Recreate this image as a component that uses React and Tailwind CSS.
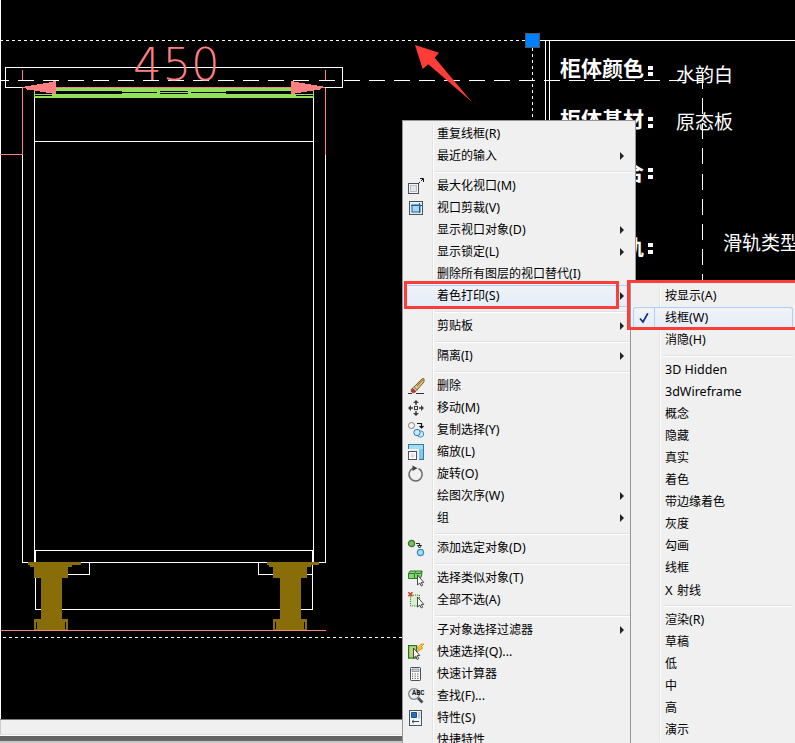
import React from "react";

const ink = "#4a525c";

const icons = {
  maximize: (
    <>
      <rect x="0.5" y="5.5" width="10" height="10" fill="#f6f6f6" stroke={ink} />
      <rect x="2.5" y="7.5" width="6" height="6" fill="#e4e6e8" stroke="#b9bdc2" />
      <path d="M10.5 5.5L12 4M13 3l2-2M12 .5h3.500v3.500" stroke="#111" fill="none" />
    </>
  ),
  clip: (
    <>
      <rect x="1.500" y="1.500" width="13" height="13" fill="#e9edf1" stroke={ink} />
      <rect x="4" y="5" width="8" height="7" fill="#a9d7f5" stroke="#1b5f9e" />
      <path d="M3 5.500h11M11.500 3v10" stroke="#1b5f9e" />
    </>
  ),
  erase: (
    <>
      <path d="M0 15.500h4M8 15.500h8" stroke="#333" />
      <path d="M5.500 9.500L14 .8h2v3L9 12z" fill="#e3c07a" stroke="#4b3a20" strokeWidth=".8" />
      <path d="M9 8l5.500-6" stroke="#8a6420" />
      <path d="M5.500 9l3.700 3.200-1.200 1.200-3.700-3z" fill="#d6dde3" stroke="#555" strokeWidth=".6" />
      <path d="M4.200 10.300l3.600 3.200c-1 1.300-3 1.500-4 .7s-1-2.600.4-3.900z" fill="#c53a1c" stroke="#7d2410" strokeWidth=".6" />
    </>
  ),
  move: (
    <>
      <rect x="6.500" y="6.500" width="3" height="3" fill="#fff" stroke="#333" />
      <path d="M8 0l3 3H5zM8 16l3-3H5zM0 8l3-3v6zM16 8l-3-3v6z" fill="#3b4046" />
      <path d="M8 2v3M8 11v3M2 8h3M11 8h3" stroke="#3b4046" strokeWidth="1.500" />
    </>
  ),
  copy: (
    <>
      <circle cx="3.500" cy="3.500" r="3" fill="#f7f7f7" stroke="#777" />
      <path d="M9 1.500h4.500V5M11.500 4l2 2 2-2" stroke="#111" fill="none" strokeWidth="1.200" />
      <circle cx="12.500" cy="12" r="3.200" fill="#cfe9fb" stroke="#3f8fcb" />
      <circle cx="9" cy="10.500" r="3.200" fill="#cfe9fb" stroke="#2679b8" />
    </>
  ),
  scale: (
    <>
      <rect x=".5" y=".5" width="15" height="15" fill="#a5dbf5" stroke="#277bb4" />
      <path d="M11 5h4v10h-4z" fill="#82c5e9" />
      <path d="M0 5h11v11H0z" fill="#f0f0f0" />
      <rect x=".5" y="7.500" width="8" height="8" fill="#fff" stroke={ink} />
      <path d="M2.500 9.500h4v4h-4z" fill="#ddd" />
    </>
  ),
  rotate: (
    <>
      <path d="M5 2.300a6.600 6.600 0 1 0 5.600.2" fill="none" stroke="#666b70" strokeWidth="1.500" />
      <path d="M4.500-.5l5 2.700-5 2.800z" fill="#3f4449" />
    </>
  ),
  add: (
    <>
      <circle cx="3.500" cy="3.500" r="3.100" fill="#86b86f" stroke="#2c7822" strokeWidth="1.200" />
      <path d="M8 3.500h3.500V6M9.500 5.500h4L11.500 8z" stroke="#111" fill="none" strokeWidth=".9" />
      <circle cx="12.500" cy="12.500" r="3.100" fill="#a9daf6" stroke="#3a8ac4" strokeWidth="1.200" />
    </>
  ),
  similar: (
    <>
      <path d="M.5 3.500L2 1h12l-.5 5L12 8.500H.5z" fill="#8ed07e" stroke="#22801c" />
      <path d="M.5 3.500h6v5M6.500 3.500L8 1M7.500 3.500h5L14 1" stroke="#22801c" fill="none" />
      <path d="M9.500 5v10l2.300-2 1.400 3 1.500-.8-1.500-2.800h2.600z" fill="#fff" stroke="#222" strokeWidth=".8" />
    </>
  ),
  none: (
    <>
      <rect x="2.500" y="3" width="9" height="11" fill="#d8efd0" stroke="#2c8a24" strokeDasharray="1.200 1" />
      <path d="M.3.300l4.200 4M4.500.300L.3 4.300" stroke="#d23a28" strokeWidth="1.500" />
      <path d="M9.500 5v10l2.300-2 1.400 3 1.500-.8-1.500-2.800h2.600z" fill="#fff" stroke="#222" strokeWidth=".8" />
    </>
  ),
  quick: (
    <>
      <rect x=".6" y="1.600" width="8" height="12.500" fill="#c4cf87" stroke="#227c1b" strokeWidth="1.200" />
      <path d="M13 0l-4 4 2 1-2 3 6-4-2-1 3-3z" fill="#ffc23e" stroke="#e17c12" strokeWidth=".7" />
      <path d="M5.500 4v10l2.300-2 1.400 3.500 1.500-.8-1.500-3.200h2.600z" fill="#fff" stroke="#222" strokeWidth=".8" />
    </>
  ),
  calc: (
    <>
      <rect x="2.500" y="1.500" width="10" height="13" rx=".7" fill="#fff" stroke={ink} />
      <path d="M4 3h7v2.500H4z" fill="#c9ced3" stroke="#6b7178" strokeWidth=".6" />
      <path d="M4 8h7.500M4 10.200h7.500M4 12.400h7.500" stroke="#444" strokeWidth="1" strokeDasharray="1.200 1.400" />
    </>
  ),
  find: (
    <>
      <path d="M10 10l4.500 4.500" stroke="#4b5056" strokeWidth="2.800" />
      <circle cx="6" cy="6" r="5.300" fill="#e9eef2" stroke="#7d858c" strokeWidth="1.300" />
      <text x="4" y="6.500" fontSize="6.500" fontWeight="700" fill="#111" textLength="12.500" lengthAdjust="spacingAndGlyphs" className="font-['Liberation_Mono',monospace]">ABC</text>
    </>
  ),
  props: (
    <>
      <rect x="1.500" y=".5" width="12" height="15" fill="#f5f6f7" stroke={ink} />
      <path d="M3.500 2.500h5v5h-5z" fill="#266fbd" stroke="#1b4e8e" />
      <path d="M10 2h2.500v6.500H10z" fill="#c9cdd1" />
      <path d="M4 11.500h7M5.800 9.900l-1.800 1.600 1.800 1.600" stroke="#333" fill="none" strokeWidth=".9" />
    </>
  ),
};

const mainItems = [
  { t: "重复线框", k: "(R)" },
  { t: "最近的输入", sub: true },
  null,
  { t: "最大化视口", k: "(M)", icon: "maximize" },
  { t: "视口剪裁", k: "(V)", icon: "clip" },
  { t: "显示视口对象", k: "(D)", sub: true },
  { t: "显示锁定", k: "(L)", sub: true },
  { t: "删除所有图层的视口替代", k: "(I)" },
  { t: "着色打印", k: "(S)", sub: true, active: true },
  null,
  { t: "剪贴板", sub: true },
  null,
  { t: "隔离", k: "(I)", sub: true },
  null,
  { t: "删除", icon: "erase" },
  { t: "移动", k: "(M)", icon: "move" },
  { t: "复制选择", k: "(Y)", icon: "copy" },
  { t: "缩放", k: "(L)", icon: "scale" },
  { t: "旋转", k: "(O)", icon: "rotate" },
  { t: "绘图次序", k: "(W)", sub: true },
  { t: "组", sub: true },
  null,
  { t: "添加选定对象", k: "(D)", icon: "add" },
  null,
  { t: "选择类似对象", k: "(T)", icon: "similar" },
  { t: "全部不选", k: "(A)", icon: "none" },
  null,
  { t: "子对象选择过滤器", sub: true },
  { t: "快速选择", k: "(Q)...", icon: "quick" },
  { t: "快速计算器", icon: "calc" },
  { t: "查找", k: "(F)...", icon: "find" },
  { t: "特性", k: "(S)", icon: "props" },
  { t: "快捷特性" },
];

const subItems = [
  { t: "按显示", k: "(A)" },
  { t: "线框", k: "(W)", checked: true },
  { t: "消隐", k: "(H)" },
  null,
  { k: "3D Hidden" },
  { k: "3dWireframe" },
  { t: "概念" },
  { t: "隐藏" },
  { t: "真实" },
  { t: "着色" },
  { t: "带边缘着色" },
  { t: "灰度" },
  { t: "勾画" },
  { t: "线框" },
  { pre: "X ", t: "射线" },
  null,
  { t: "渲染", k: "(R)" },
  { t: "草稿" },
  { t: "低" },
  { t: "中" },
  { t: "高" },
  { t: "演示" },
];

function Label({ item }) {
  return (
    <span className="whitespace-pre text-[12px] leading-[22px] text-black">
      {item.pre && <span className="text-[13px] tracking-[0.5px]">{item.pre}</span>}
      {item.t}
      {item.k && <span className="text-[12.5px]">{item.k}</span>}
    </span>
  );
}

function Separator() {
  return (
    <div className="flex h-2 flex-col pt-1 pl-[30px]">
      <div className="h-px bg-[#e0e0e0]" />
      <div className="h-px bg-white" />
    </div>
  );
}

function MainItem({ item }) {
  return (
    <div
      className={
        "flex h-[22px] items-center pr-[9px] " +
        (item.active
          ? "rounded-[3px] bg-linear-to-b from-[#f0f3f8] to-[#e4ecf8] shadow-[inset_0_0_0_1px_#aecff7]"
          : "")
      }
    >
      <div className="flex w-[32px] shrink-0 pl-[3px]">
        {item.icon && (
          <svg width="16" height="16" viewBox="0 0 16 16" fill="none" className="overflow-visible">
            {icons[item.icon]}
          </svg>
        )}
      </div>
      <Label item={item} />
      {item.sub && (
        <svg width="4" height="8" viewBox="0 0 4 8" className="ml-auto">
          <path d="M0 0l4 4-4 4z" fill="#222" />
        </svg>
      )}
    </div>
  );
}

function SubItem({ item }) {
  return (
    <div
      className={
        "flex h-[22px] items-center " +
        (item.checked
          ? "rounded-[3px] bg-linear-to-b from-[#f1f3f7] to-[#e5edf8] shadow-[inset_0_0_0_1px_#aecff7]"
          : "")
      }
    >
      <div className="flex w-[32px] shrink-0">
        {item.checked && (
          <div className="flex h-[22px] w-[22px] items-center justify-center border-r border-[#aecff7]">
            <svg width="10" height="11" viewBox="0 0 10 11" fill="none">
              <path d="M1 5.500l3 3.500L8.800.3" stroke="#12318f" strokeWidth="1.800" />
            </svg>
          </div>
        )}
      </div>
      <Label item={item} />
    </div>
  );
}

function Leg({ x }) {
  return (
    <g transform={`translate(${x} 0)`} fill="#886d08">
      <path d="M7 567h34v11h-6v41h6v11H7v-11h7v-41H7z" />
      <path d="M9.500 622v7M38.500 622v7" stroke="#000" />
    </g>
  );
}

function Drawing() {
  return (
    <svg width="795" height="743" viewBox="0 0 795 743" fill="none" shapeRendering="crispEdges" className="absolute left-0 top-0">
      <g stroke="#fff">
        <path d="M.5 0V719" />
        <path d="M0 40.500H525M3 637.500H402M532.500 48V120" strokeDasharray="3 3" />
        <path d="M540 40.500H795M545.500 40V120M549.500 40V120" />
        <path d="M-7 80.500H703" strokeDasharray="16 9.040" />
        <path d="M702.500 73V282" strokeDasharray="16 9.150" />
        <path d="M5.500 67.500H342.500V87.500H5.500z" />
        <path d="M22.500 155V562.500H325.500V155M34.500 98V562M313.500 98V562M34 141.500H313" />
        <path d="M35.500 550.500H312.500V609.500H35.500zM68 574.500H89.500V562M258.500 562V574.500H312" />
      </g>
      <path d="M34 88h280v10H34z" fill="#92e05a" />
      <path d="M35 91h87v3H35zM226 91h87v3h-87zM122 92h35v1h-35zM160 91h28v1h-28zM160 93h28v1h-28zM191 92h35v1h-35zM35 95h17v1H35zM296 95h17v1h-17z" fill="#000" />
      <g stroke="#ff8080">
        <path d="M22.500 70V80M22.500 87V155M0 154.500H22M325.500 70V80M325.500 88V155M22 87.500H325M1 630.500H326" />
      </g>
      <path d="M25 86h6v-1h6v-1h6v-1h6v-1h4v-1h3v13h-4v-1h-6v-1h-6v-1h-6v-1h-7zM323 86h-6v-1h-6v-1h-6v-1h-6v-1h-5v-1h-3v13h4v-1h6v-1h6v-1h6v-1h6z" fill="#ff8080" />
      <text
        x="133 162.500 191"
        y="80"
        fontSize="45"
        fontWeight="200"
        fill="#ff8080"
        className="font-['DejaVu_Sans',sans-serif]"
      >
        450
      </text>
      <Leg x={27} />
      <path d="M28 562h53v3h-9v2H30v-2h-2zM267 562h52v3h-8v2h-42v-2h-2z" fill="#886d08" />
      <Leg x={266} />
      <rect x="525.500" y="33.500" width="14" height="14" fill="#007fff" stroke="#4c5a68" />
      <g fill="#fff" fontSize="21" fontWeight="700" className="font-['Noto_Sans_CJK_SC',sans-serif]">
        <text x="560" y="76">柜体颜色</text>
        <text x="560" y="127">柜体基材</text>
        <text x="623" y="180">合</text>
        <text x="623" y="255">轨</text>
      </g>
      <path d="M648 66h5v4h-5zM648 72h5v4h-5zM648 117h5v4h-5zM648 124h5v4h-5zM648 168h5v4h-5zM648 175h5v4h-5zM648 243h5v4h-5zM648 250h5v4h-5z" fill="#fff" />
      <g fill="#fff" fontSize="19" className="font-['Noto_Sans_CJK_SC',sans-serif]">
        <text x="676" y="82">水韵白</text>
        <text x="676" y="129">原态板</text>
        <text x="723" y="250">滑轨类型</text>
      </g>
      <path shapeRendering="auto" d="M415 45l24 7.700-4.300 5 37 44-43.400-37.400-5.600 4.700z" fill="#fe3c38" />
    </svg>
  );
}

export default function App() {
  return (
    <div className="relative flex h-[743px] w-[795px] flex-col justify-end overflow-hidden bg-black font-['Noto_Sans','Noto_Sans_CJK_SC',sans-serif]">
      <Drawing />
      <div className="relative flex h-6 flex-col">
        <div className="h-px bg-[#7a7a7a]" />
        <div className="h-[14px] border-l border-[#ccc] bg-[#f0f0f0]" />
        <div className="h-px bg-[#e0e0e0]" />
        <div className="h-px bg-white" />
        <div className="h-[5px] bg-[#666]" />
        <div className="h-[2px] bg-[#c8c8c8]" />
      </div>

      <div className="absolute left-[402px] top-[120px] h-[640px] w-[234px] border border-[#979797] bg-[#f0f0f0] px-[2px] pt-[2px]">
        <div className="absolute bottom-0 left-[29px] top-[3px] w-[2px] border-l border-[#e2e3e3] bg-white" />
        <div className="relative flex flex-col">
          {mainItems.map((item, i) => (item ? <MainItem key={i} item={item} /> : <Separator key={i} />))}
        </div>
      </div>

      <div className="absolute left-[630px] top-[282px] h-[480px] w-[175px] border border-[#979797] bg-[#f0f0f0] pl-[2px] pr-[11px] pt-[2px]">
        <div className="absolute left-[28px] top-[3px] h-[456px] w-[2px] border-l border-[#e2e3e3] bg-white" />
        <div className="relative flex flex-col">
          {subItems.map((item, i) => (item ? <SubItem key={i} item={item} /> : <Separator key={i} />))}
        </div>
      </div>

      <div className="absolute left-[404px] top-[281px] h-[28px] w-[215px] border-3 border-[#fe3c38]" />
      <div className="absolute left-[627px] top-[280px] h-[50px] w-[180px] border-3 border-[#fe3c38]" />
    </div>
  );
}
